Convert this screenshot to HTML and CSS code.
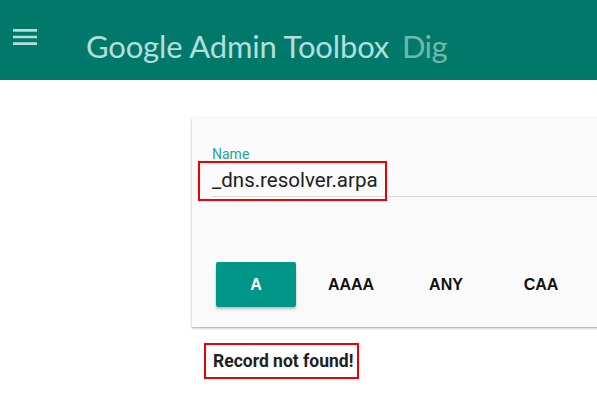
FILE: index.html
```html
<!DOCTYPE html>
<html>
<head>
<meta charset="utf-8">
<link rel="stylesheet" href="styles.css">
</head>
<body>
<header class="topbar">
  <div class="menu-btn">
    <svg width="32" height="32" viewBox="0 0 24 24"><path d="M3 18h18v-2H3v2zm0-5h18v-2H3v2zm0-7v2h18V6H3z" fill="#b2dfdb"/></svg>
  </div>
  <h1 class="title">Google Admin Toolbox <span class="sub">Dig</span></h1>
</header>
<main class="main">
  <section class="card">
    <div class="field">
      <label class="label">Name</label>
      <div class="value">_dns.resolver.arpa</div>
      <div class="mark mark-input"></div>
    </div>
    <div class="types">
      <button class="type active">A</button>
      <button class="type">AAAA</button>
      <button class="type">ANY</button>
      <button class="type">CAA</button>
    </div>
  </section>
  <div class="result">
    <span class="result-text">Record not found!</span>
  </div>
</main>
</body>
</html>
```
FILE: styles.css
```css
html, body {
  margin: 0;
  padding: 0;
  overflow: hidden;
  background: #ffffff;
  font-family: Roboto, "Liberation Sans", sans-serif;
}
.topbar {
  height: 80px;
  background: #00796b;
  display: flex;
  align-items: flex-start;
}
.menu-btn {
  width: 32px;
  height: 32px;
  margin: 21px 0 0 9px;
}
.menu-btn svg { display: block; }
.title {
  margin: 26px 0 0 45px;
  font-family: Lato, "Open Sans", sans-serif;
  font-weight: 400;
  font-size: 31px;
  line-height: 40px;
  color: #b2dfdb;
  letter-spacing: -0.15px;
  white-space: nowrap;
}
.sub {
  color: #6fb8ad;
  margin-left: 5px;
  letter-spacing: -0.6px;
}
.main {
  padding: 38px 0 0 192px;
}
.card {
  width: 700px;
  background: #fafafa;
  box-shadow: 0 1px 3px rgba(0,0,0,0.25), 0 1px 1px rgba(0,0,0,0.12);
  padding: 28px 0 20px 20px;
  box-sizing: border-box;
}
.field {
  position: relative;
  border-bottom: 1px solid #d9d9d9;
  padding-bottom: 4px;
}
.label {
  display: block;
  font-size: 14px;
  line-height: 16px;
  color: #26a69a;
}
.value {
  margin-top: 6px;
  font-size: 20.5px;
  line-height: 24px;
  color: #212121;
}
.mark {
  position: absolute;
  border: 2px solid #ee0000;
  box-sizing: border-box;
  pointer-events: none;
}
.mark-input {
  left: -14px;
  top: 15px;
  width: 189px;
  height: 40px;
}
.types {
  display: flex;
  gap: 15px;
  margin-top: 65px;
  padding-left: 4px;
}
.type {
  flex: none;
  width: 80px;
  height: 45px;
  border: none;
  border-radius: 2px;
  background: transparent;
  font-family: "Liberation Sans", Arial, sans-serif;
  font-weight: 700;
  font-size: 16px;
  color: #111111;
  padding: 0;
}
.type.active {
  background: #009688;
  color: #ffffff;
  box-shadow: 0 2px 3px rgba(0,0,0,0.25);
}
.result {
  padding: 16px 0 0 12px;
}
.result-text {
  display: inline-block;
  border: 2px solid #ee0000;
  padding: 6px 4px 6px 7px;
  font-weight: 700;
  font-size: 17.5px;
  line-height: 20px;
  color: #212121;
}
```
